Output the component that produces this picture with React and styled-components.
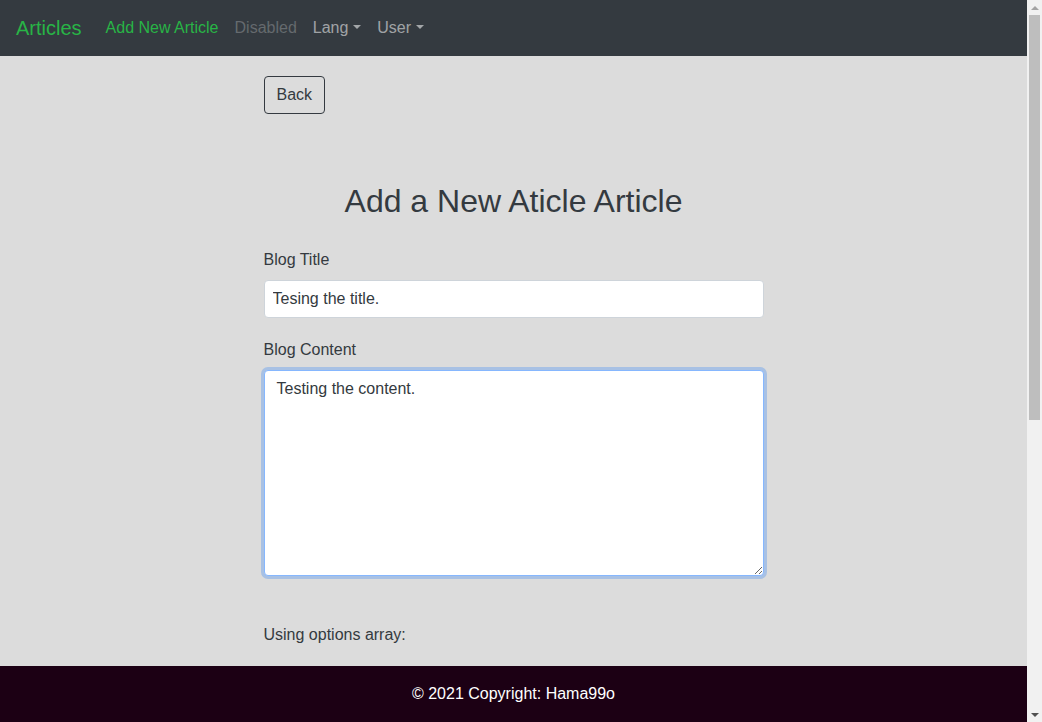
import React, { useEffect, useRef } from 'react';
import styled, { createGlobalStyle } from 'styled-components';

const GlobalStyle = createGlobalStyle`
  html, body {
    margin: 0;
    height: 100%;
    overflow: hidden;
  }
  body {
    background: #dcdcdc;
    font-family: "Liberation Sans", Arial, sans-serif;
    font-size: 16px;
    line-height: 1.5;
    color: #343a40;
  }
  * { box-sizing: border-box; }
`;

// Window: page viewport on the left, scrollbar on the right
const Frame = styled.div`
  display: flex;
  height: 100vh;
`;

const Viewport = styled.div`
  position: relative;
  flex: 1;
  overflow: hidden;
`;

const ScrollBar = styled.div`
  display: flex;
  flex-direction: column;
  width: 15px;
  background: #f1f1f1;
`;

const Arrow = styled.div`
  display: flex;
  align-items: center;
  justify-content: center;
  height: 15px;

  &::after {
    content: '';
    border-left: 4px solid transparent;
    border-right: 4px solid transparent;
    ${(p) =>
      p.$down
        ? 'border-top: 4px solid #505050;'
        : 'border-bottom: 4px solid #a3a3a3;'}
  }
`;

const Track = styled.div`
  flex: 1;
  padding: 0 2px;
`;

const Thumb = styled.div`
  height: 405px;
  background: #bebebe;
`;

const Navbar = styled.nav`
  display: flex;
  align-items: center;
  height: 56px;
  padding: 8px 16px;
  background: #343a40;
`;

const Brand = styled.a`
  font-size: 20px;
  line-height: 30px;
  padding: 5px 0;
  margin-right: 16px;
  color: #28b446;
  text-decoration: none;
`;

const NavLink = styled.a`
  padding: 8px;
  font-size: 16px;
  line-height: 24px;
  text-decoration: none;
  color: ${(p) =>
    p.$active ? '#28b446' : p.$disabled ? 'rgba(255,255,255,0.25)' : 'rgba(255,255,255,0.55)'};
`;

const Caret = styled.span`
  display: inline-block;
  margin-left: 0.3em;
  vertical-align: 0.255em;
  border-top: 0.3em solid;
  border-right: 0.31em solid transparent;
  border-left: 0.31em solid transparent;
`;

const Main = styled.main`
  width: 500px;
  margin: 0 auto;
  padding-top: 20px;
`;

const BackButton = styled.button`
  font-family: inherit;
  font-size: 16px;
  line-height: 24px;
  padding: 6px 12px;
  border: 1px solid #343a40;
  border-radius: 4px;
  background: transparent;
  color: #343a40;
`;

const Title = styled.h2`
  margin: 68px 0 28px;
  font-size: 32px;
  line-height: 38px;
  font-weight: 400;
  text-align: center;
  color: #343a40;
`;

const Field = styled.div`
  margin-bottom: ${(p) => p.$gap || 20}px;
`;

const Label = styled.label`
  display: block;
  margin-bottom: 8px;
  color: #343a40;
`;

const TextInput = styled.input`
  display: block;
  width: 100%;
  height: 38px;
  padding: 6px 8px;
  font-family: inherit;
  font-size: 16px;
  color: #343a40;
  background: #fff;
  border: 1px solid #ced4da;
  border-radius: 4px;
  outline: none;
`;

const TextArea = styled.textarea`
  display: block;
  width: 100%;
  height: 206px;
  padding: 6px 12px;
  font-family: inherit;
  font-size: 16px;
  line-height: 24px;
  color: #343a40;
  caret-color: #212529;
  background: #fff;
  border: 1px solid #86b7fe;
  border-radius: 4px;
  box-shadow: 0 0 0 3px rgba(13, 110, 253, 0.25);
  outline: none;
`;

const Note = styled.p`
  margin: 0 0 30px;
`;

const Select = styled.select`
  width: 100%;
  height: 38px;
  font-family: inherit;
  font-size: 16px;
`;

const Footer = styled.footer`
  position: absolute;
  left: 0;
  right: 0;
  bottom: 0;
  height: 56px;
  line-height: 56px;
  text-align: center;
  color: #fff;
  background: #1c0014;
`;

export default function App() {
  const contentRef = useRef(null);

  // the content box is being typed into: focus it with the caret at the end
  useEffect(() => {
    const el = contentRef.current;
    if (!el) return;
    el.focus();
    el.setSelectionRange(el.value.length, el.value.length);
  }, []);

  return (
    <Frame>
      <GlobalStyle />
      <Viewport>
        <Navbar>
          <Brand href="#">Articles</Brand>
          <NavLink $active href="#">Add New Article</NavLink>
          <NavLink $disabled href="#">Disabled</NavLink>
          <NavLink href="#">Lang<Caret /></NavLink>
          <NavLink href="#">User<Caret /></NavLink>
        </Navbar>
        <Main>
          <BackButton>Back</BackButton>
          <Title>Add a New Aticle Article</Title>
          <Field>
            <Label>Blog Title</Label>
            <TextInput defaultValue="Tesing the title." />
          </Field>
          <Field $gap={47}>
            <Label>Blog Content</Label>
            <TextArea ref={contentRef} defaultValue="Testing the content." />
          </Field>
          <Note>Using options array:</Note>
          <Select>
            <option>English</option>
          </Select>
        </Main>
        <Footer>© 2021 Copyright: Hama99o</Footer>
      </Viewport>
      <ScrollBar>
        <Arrow />
        <Track>
          <Thumb />
        </Track>
        <Arrow $down />
      </ScrollBar>
    </Frame>
  );
}
